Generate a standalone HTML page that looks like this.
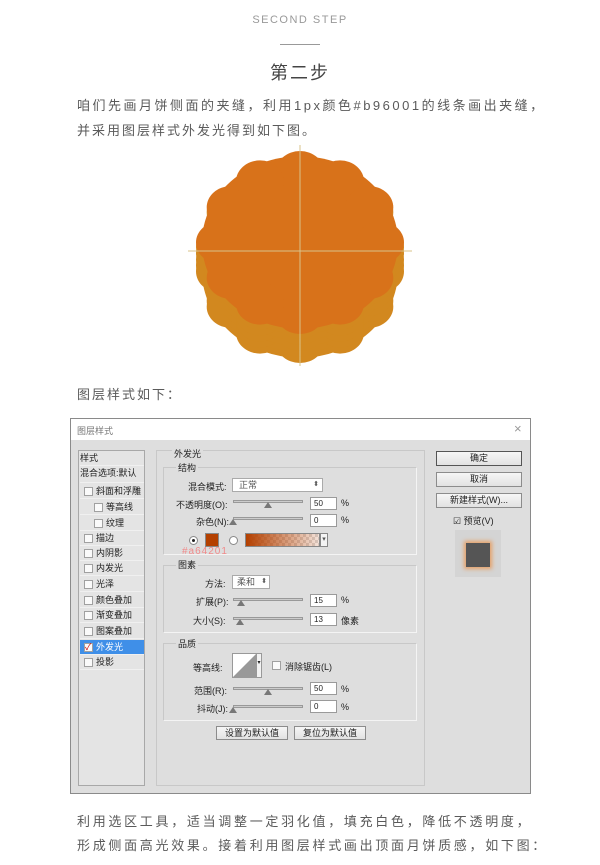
<!DOCTYPE html>
<html><head><meta charset="utf-8"><style>
*{margin:0;padding:0;box-sizing:border-box}
body{width:600px;height:865px;background:#fff;position:relative;overflow:hidden;font-family:"Liberation Sans","Noto Sans CJK SC",sans-serif;color:#555}
.a{position:absolute;white-space:nowrap}
.p{font-size:13px;letter-spacing:2px;color:#5a5a5a}
.d{font-size:9px;color:#222}
.btn{position:absolute;background:linear-gradient(#f6f6f6,#e2e2e2);border:1px solid #8c8c8c;font-size:9px;text-align:center;line-height:12px;color:#222}
.inp{position:absolute;background:#fff;border:1px solid #9a9a9a;width:27px;height:13px;font-size:8px;line-height:11px;padding-left:3px;color:#222}
.sl{position:absolute;height:3px;border:1px solid #999;background:#ccc;width:70px}
.th{position:absolute;width:0;height:0;border-left:4px solid transparent;border-right:4px solid transparent;border-bottom:6px solid #777}
.grp{position:absolute;border:1px solid #c8c8c8;border-right-color:#f4f4f4;border-bottom-color:#f4f4f4}
.cb{position:absolute;width:9px;height:9px;border:1px solid #a0a0a0;background:#fafafa}
.li{position:absolute;left:80px;width:64px;height:15px;border-bottom:1px solid #f0f0f0;font-size:9px;color:#222;line-height:15px}
</style></head><body>
<div class="a" style="left:0;width:600px;text-align:center;top:14px;font-size:11px;letter-spacing:1.5px;color:#999">SECOND STEP</div>
<div class="a" style="left:280px;top:44px;width:40px;height:1px;background:#999"></div>
<div class="a" style="left:0;width:600px;text-align:center;top:59px;font-size:18px;letter-spacing:2px;color:#444">第二步</div>
<div class="a p" style="left:77px;top:95px;letter-spacing:2.5px">咱们先画月饼侧面的夹缝，利用1px颜色#b96001的线条画出夹缝，</div>
<div class="a p" style="left:77px;top:120px">并采用图层样式外发光得到如下图。</div>

<svg class="a" style="left:0;top:130px" width="600" height="250" viewBox="0 130 600 250">
<defs>
<g id="m" transform="translate(300 242.5) scale(1 0.88) translate(-300 -242)">
<circle cx="300" cy="242" r="98"/>
<circle cx="300" cy="162" r="24"/><circle cx="340" cy="172.7" r="24"/><circle cx="369.3" cy="202" r="24"/><circle cx="380" cy="242" r="24"/><circle cx="369.3" cy="282" r="24"/><circle cx="340" cy="311.3" r="24"/><circle cx="300" cy="322" r="24"/><circle cx="260" cy="311.3" r="24"/><circle cx="230.7" cy="282" r="24"/><circle cx="220" cy="242" r="24"/><circle cx="230.7" cy="202" r="24"/><circle cx="260" cy="172.7" r="24"/>
</g>
</defs>
<g fill="#d2881f">
<use href="#m" y="29"/><use href="#m" y="23"/><use href="#m" y="17"/><use href="#m" y="11"/><use href="#m" y="5"/>
</g>
<use href="#m" fill="#d8721a"/>
<line x1="300" y1="145" x2="300" y2="366" stroke="#d9c38a" stroke-width="1"/>
<line x1="188" y1="251" x2="412" y2="251" stroke="#d9c38a" stroke-width="1"/>
</svg>

<div class="a p" style="left:77px;top:384px">图层样式如下：</div>

<!-- dialog -->
<div class="a" style="left:70px;top:418px;width:461px;height:376px;background:#dedede;border:1px solid #8a8a8a"></div>
<div class="a" style="left:71px;top:419px;width:459px;height:21px;background:#fff"></div>
<div class="a d" style="left:77px;top:424px;color:#777">图层样式</div>
<div class="a" style="left:514px;top:421px;font-size:13px;color:#999">×</div>
<!-- left -->
<div class="a" style="left:78px;top:450px;width:67px;height:336px;border:1px solid #a8a8a8;background:#e4e4e4"></div>
<div class="li" style="top:451px">样式</div>
<div class="li" style="top:466px;height:17px">混合选项:默认</div>
<div class="li" style="top:484px;padding-left:16px">斜面和浮雕</div>
<div class="li" style="top:500px;padding-left:26px">等高线</div>
<div class="li" style="top:516px;padding-left:26px">纹理</div>
<div class="li" style="top:531px;padding-left:16px">描边</div>
<div class="li" style="top:546px;padding-left:16px">内阴影</div>
<div class="li" style="top:561px;padding-left:16px">内发光</div>
<div class="li" style="top:577px;padding-left:16px">光泽</div>
<div class="li" style="top:593px;padding-left:16px">颜色叠加</div>
<div class="li" style="top:608px;padding-left:16px">渐变叠加</div>
<div class="li" style="top:624px;padding-left:16px">图案叠加</div>
<div class="li" style="top:640px;padding-left:16px;background:#3f8fe8;color:#fff">外发光</div>
<div class="li" style="top:655px;padding-left:16px">投影</div>
<div class="cb" style="left:84px;top:487px"></div><div class="cb" style="left:94px;top:503px"></div><div class="cb" style="left:94px;top:519px"></div>
<div class="cb" style="left:84px;top:534px"></div><div class="cb" style="left:84px;top:549px"></div><div class="cb" style="left:84px;top:564px"></div><div class="cb" style="left:84px;top:580px"></div><div class="cb" style="left:84px;top:596px"></div><div class="cb" style="left:84px;top:611px"></div><div class="cb" style="left:84px;top:627px"></div>
<div class="cb" style="left:84px;top:643px;font-size:9px;line-height:7px;color:#c00">✓</div>
<div class="cb" style="left:84px;top:658px"></div>
<!-- middle -->
<div class="a" style="left:156px;top:450px;width:269px;height:336px;border:1px solid #c8c8c8"></div>
<div class="a d" style="left:172px;top:447px;background:#dedede;padding:0 2px">外发光</div>
<div class="grp" style="left:163px;top:467px;width:254px;height:88px"></div>
<div class="a d" style="left:176px;top:461px;background:#dedede;padding:0 2px">结构</div>
<div class="a d" style="left:188px;top:480px">混合模式:</div>
<div class="a" style="left:232px;top:478px;width:91px;height:14px;background:#fff;border:1px solid #aaa;font-size:9px;padding-left:6px;line-height:12px">正常<span style="float:right;margin-right:3px;font-size:7px">⬍</span></div>
<div class="a d" style="left:176px;top:498px">不透明度(O):</div>
<div class="sl" style="left:233px;top:500px"></div><div class="th" style="left:264px;top:502px"></div>
<div class="inp" style="left:310px;top:497px">50</div><div class="a d" style="left:341px;top:498px">%</div>
<div class="a d" style="left:196px;top:515px">杂色(N):</div>
<div class="sl" style="left:233px;top:517px"></div><div class="th" style="left:229px;top:519px"></div>
<div class="inp" style="left:310px;top:514px">0</div><div class="a d" style="left:341px;top:515px">%</div>
<div class="a" style="left:189px;top:536px;width:9px;height:9px;border-radius:50%;border:1px solid #888;background:#fff"><div style="width:3px;height:3px;background:#222;border-radius:50%;margin:2px"></div></div>
<div class="a" style="left:205px;top:533px;width:14px;height:14px;background:#b44000;border:1px solid #888"></div>
<div class="a" style="left:229px;top:536px;width:9px;height:9px;border-radius:50%;border:1px solid #888;background:#fff"></div>
<div class="a" style="left:245px;top:533px;width:75px;height:14px;border:1px solid #888;background:linear-gradient(90deg,#b44000,rgba(180,64,0,0.15)),repeating-conic-gradient(#ddd 0 25%,#fff 0 50%) 0 0/6px 6px"></div>
<div class="a" style="left:320px;top:533px;width:8px;height:14px;border:1px solid #888;background:#f4f4f4;font-size:7px;line-height:12px;text-align:center">▾</div>
<div class="a" style="left:182px;top:546px;font-size:10px;color:#f08a8a;letter-spacing:1px">#a64201</div>
<div class="grp" style="left:163px;top:565px;width:254px;height:68px"></div>
<div class="a d" style="left:176px;top:558px;background:#dedede;padding:0 2px">图素</div>
<div class="a d" style="left:205px;top:577px">方法:</div>
<div class="a" style="left:232px;top:575px;width:38px;height:14px;background:#fff;border:1px solid #aaa;font-size:9px;padding-left:4px;line-height:12px">柔和<span style="float:right;margin-right:2px;font-size:7px">⬍</span></div>
<div class="a d" style="left:196px;top:595px">扩展(P):</div>
<div class="sl" style="left:233px;top:598px"></div><div class="th" style="left:237px;top:600px"></div>
<div class="inp" style="left:310px;top:594px">15</div><div class="a d" style="left:341px;top:595px">%</div>
<div class="a d" style="left:193px;top:614px">大小(S):</div>
<div class="sl" style="left:233px;top:617px"></div><div class="th" style="left:236px;top:619px"></div>
<div class="inp" style="left:310px;top:613px">13</div><div class="a d" style="left:341px;top:614px">像素</div>
<div class="grp" style="left:163px;top:643px;width:254px;height:78px"></div>
<div class="a d" style="left:176px;top:637px;background:#dedede;padding:0 2px">品质</div>
<div class="a d" style="left:193px;top:661px">等高线:</div>
<svg class="a" style="left:232px;top:653px" width="30" height="26"><rect x="0.5" y="0.5" width="24" height="24" fill="#fff" stroke="#999"/><polygon points="1,24 24,1 24,24" fill="#999"/><rect x="24.5" y="0.5" width="5" height="24" fill="#f2f2f2" stroke="#999"/><text x="25.5" y="11" font-size="6" fill="#222">▾</text></svg>
<div class="cb" style="left:272px;top:661px"></div><div class="a d" style="left:285px;top:660px">消除锯齿(L)</div>
<div class="a d" style="left:194px;top:684px">范围(R):</div>
<div class="sl" style="left:233px;top:687px"></div><div class="th" style="left:264px;top:689px"></div>
<div class="inp" style="left:310px;top:682px">50</div><div class="a d" style="left:341px;top:684px">%</div>
<div class="a d" style="left:197px;top:702px">抖动(J):</div>
<div class="sl" style="left:233px;top:705px"></div><div class="th" style="left:229px;top:707px"></div>
<div class="inp" style="left:310px;top:700px">0</div><div class="a d" style="left:341px;top:702px">%</div>
<div class="btn" style="left:216px;top:726px;width:72px;height:14px">设置为默认值</div>
<div class="btn" style="left:294px;top:726px;width:72px;height:14px">复位为默认值</div>
<!-- right -->
<div class="btn" style="left:436px;top:451px;width:86px;height:15px;border-color:#555">确定</div>
<div class="btn" style="left:436px;top:472px;width:86px;height:15px">取消</div>
<div class="btn" style="left:436px;top:493px;width:86px;height:15px">新建样式(W)...</div>
<div class="a d" style="left:453px;top:514px">☑ 预览(V)</div>
<div class="a" style="left:455px;top:530px;width:46px;height:47px;background:#d4d4d4"></div>
<div class="a" style="left:466px;top:543px;width:24px;height:24px;background:#555;box-shadow:0 0 4px 2px #e6a066"></div>

<div class="a p" style="left:77px;top:811px;letter-spacing:2.7px">利用选区工具，适当调整一定羽化值，填充白色，降低不透明度，</div>
<div class="a p" style="left:77px;top:835px;letter-spacing:2.7px">形成侧面高光效果。接着利用图层样式画出顶面月饼质感，如下图：</div>
</body></html>
